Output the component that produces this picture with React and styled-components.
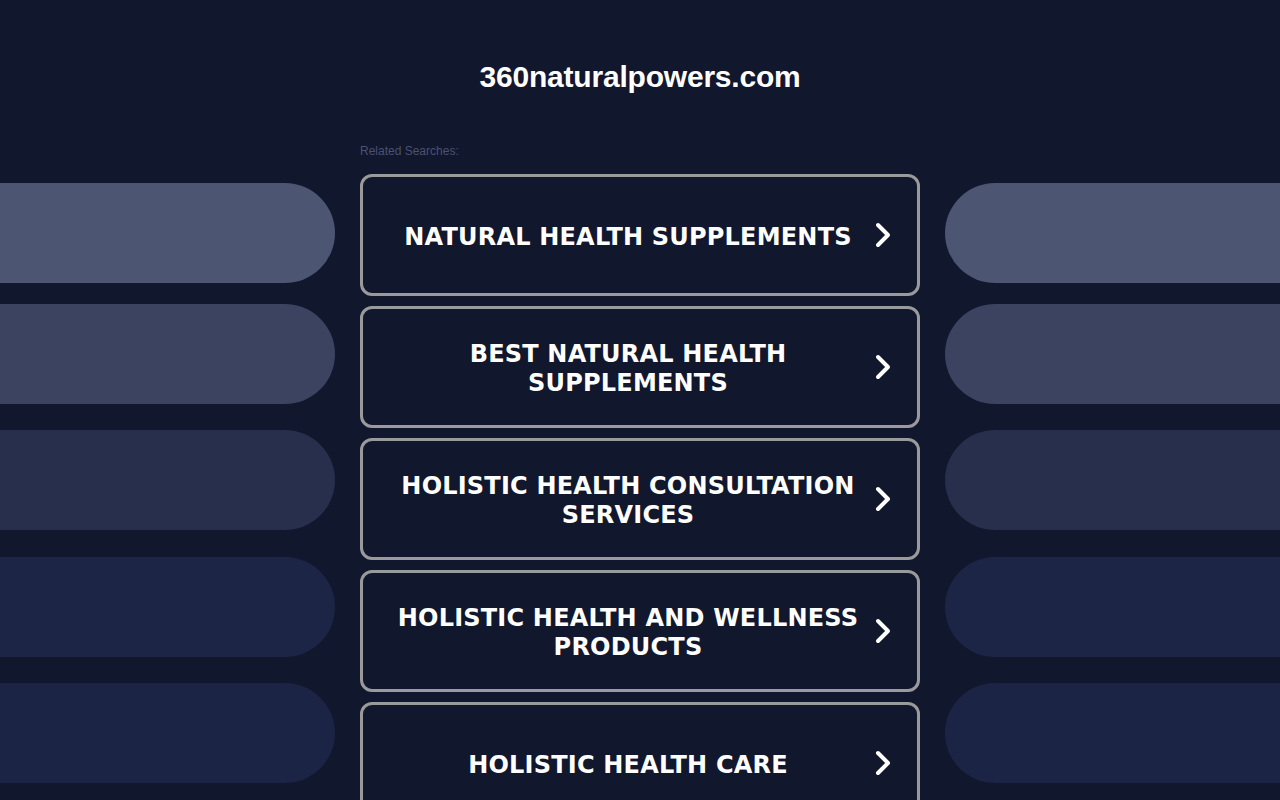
import React from 'react';
import styled, { createGlobalStyle } from 'styled-components';

const GlobalStyle = createGlobalStyle`
    html, body {
        margin: 0;
        padding: 0;
        background: #11172d;
        overflow: hidden;
    }
`

const Page = styled.div`
    width: 1280px;
    height: 800px;
    background: #11172d;
    font-family: "Liberation Sans", Arial, sans-serif;
    overflow: hidden;
`

const Title = styled.h1`
    margin: 0;
    padding-top: 59px;
    height: 36px;
    line-height: 36px;
    text-align: center;
    font-size: 30px;
    font-weight: bold;
    letter-spacing: -0.2px;
    color: #ffffff;
`

const Layout = styled.div`
    display: grid;
    grid-template-columns: 335px 560px 335px;
    column-gap: 25px;
    margin-top: 48px;
`

const Side = styled.div`
    display: flex;
    flex-direction: column;
    padding-top: 40px;
`

const Pill = styled.div`
    height: 100px;
    margin-bottom: ${p => p.gap}px;
    background: ${p => p.color};
    border-radius: ${p => p.right ? '50px 0 0 50px' : '0 50px 50px 0'};
`

const Center = styled.div`
    display: flex;
    flex-direction: column;
`

const Related = styled.div`
    font-size: 12px;
    line-height: 14px;
    color: #4a5272;
    margin-top: 1px;
    margin-bottom: 16px;
`

const Card = styled.a`
    box-sizing: border-box;
    display: flex;
    align-items: center;
    height: 122px;
    margin-bottom: 10px;
    padding: 4px 24px 0 20px;
    border: 3px solid #9a9a9c;
    border-radius: 12px;
    background: #11172d;
    text-decoration: none;
    cursor: pointer;
`

const CardText = styled.span`
    flex: 1;
    text-align: center;
    font-family: "DejaVu Sans", Verdana, sans-serif;
    font-weight: bold;
    font-size: 24px;
    line-height: 29px;
    letter-spacing: 0.2px;
    color: #ffffff;
    text-transform: uppercase;
`

const Chevron = styled.svg`
    width: 20px;
    height: 28px;
    flex: none;
    margin-top: -4px;
`

const pills = [
    { color: '#4c5672', gap: 21 },
    { color: '#3b4361', gap: 26 },
    { color: '#272f4d', gap: 27 },
    { color: '#1d2546', gap: 26 },
    { color: '#1c2445', gap: 26 },
]

const searches = [
    'Natural Health Supplements',
    'Best Natural Health Supplements',
    'Holistic Health Consultation Services',
    'Holistic Health and Wellness Products',
    'Holistic Health Care',
]

const SideColumn = ({ right }) => (
    <Side>
        {pills.map((p, i) => <Pill key={i} color={p.color} gap={p.gap} right={right} />)}
    </Side>
)

const App = () => {
    return (
        <Page>
            <GlobalStyle />
            <Title>360naturalpowers.com</Title>
            <Layout>
                <SideColumn />
                <Center>
                    <Related>Related Searches:</Related>
                    {searches.map(s => (
                        <Card key={s}>
                            <CardText>{s}</CardText>
                            <Chevron viewBox="0 0 20 28">
                                <path d="M5 4 L15 14 L5 24" fill="none" stroke="#ffffff" strokeWidth="4" strokeLinecap="round" strokeLinejoin="round" />
                            </Chevron>
                        </Card>
                    ))}
                </Center>
                <SideColumn right />
            </Layout>
        </Page>
    );
}

export default App;
